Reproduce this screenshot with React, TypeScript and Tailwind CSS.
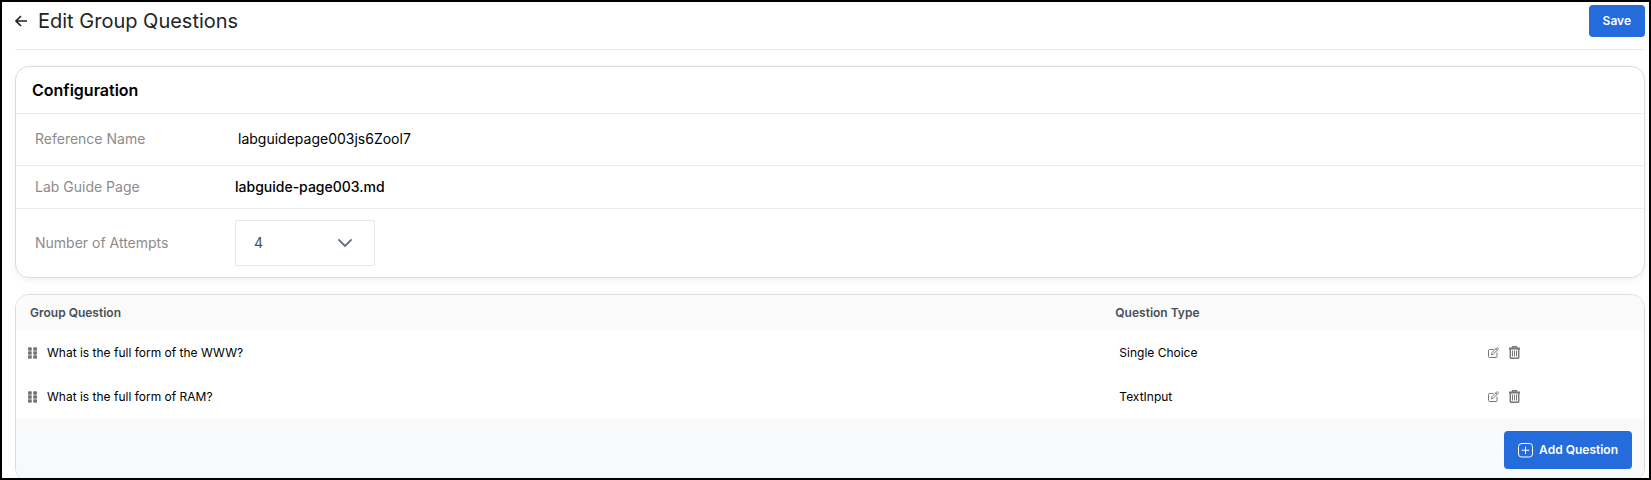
import { useState } from "react";

const QUESTIONS = [
  { id: 1, text: "What is the full form of the WWW?", type: "Single Choice" },
  { id: 2, text: "What is the full form of RAM?", type: "TextInput" },
];

function ArrowLeftIcon() {
  return (
    <svg width="12" height="12" viewBox="0 0 12 12" fill="none" stroke="currentColor" strokeWidth="1.6" aria-hidden="true">
      <path d="M12 6H1M6 1L1 6l5 5" />
    </svg>
  );
}

function ChevronIcon() {
  return (
    <svg width="14" height="8" viewBox="0 0 14 8" fill="none" stroke="currentColor" strokeWidth="1.8" strokeLinecap="round" strokeLinejoin="round" aria-hidden="true">
      <path d="M1 1l6 6 6-6" />
    </svg>
  );
}

function GripIcon() {
  return (
    <svg width="9" height="12" viewBox="0 0 9 12" fill="currentColor" aria-hidden="true">
      {[0, 4, 8].map((y) => (
        <g key={y}>
          <rect x="0" y={y + 0.2} width="3.8" height="3.6" rx="0.8" />
          <rect x="5.2" y={y + 0.2} width="3.8" height="3.6" rx="0.8" />
        </g>
      ))}
    </svg>
  );
}

function EditIcon() {
  return (
    <svg width="11" height="11" viewBox="0 0 11 11" fill="none" stroke="currentColor" strokeLinejoin="round" strokeLinecap="round" aria-hidden="true">
      <path d="M5 2.500H1.500a1 1 0 0 0-1 1v6a1 1 0 0 0 1 1h6.500a1 1 0 0 0 1-1V6" />
      <path d="M3.600 7.500l.5-2L8.600 1a.9.9 0 0 1 1.400 0 .9.9 0 0 1 0 1.400L5.500 7z" />
      <path d="M7.600 2l1.400 1.400" />
    </svg>
  );
}

function TrashIcon() {
  return (
    <svg width="11" height="13" viewBox="0 0 11 13" fill="none" stroke="currentColor" strokeLinejoin="round" aria-hidden="true">
      <path d="M0 2.500h11" strokeWidth="1.800" />
      <path d="M3.500 2V.800h4V2" strokeWidth="1.400" />
      <path d="M1.300 2.500v8.800a1 1 0 0 0 1 1h6.400a1 1 0 0 0 1-1V2.500" strokeWidth="1.500" />
      <path d="M3.500 4.500v6M5.500 4.500v6M7.500 4.500v6" strokeWidth="1" />
    </svg>
  );
}

function PlusSquareIcon() {
  return (
    <svg width="15" height="15" viewBox="0 0 15 15" fill="none" stroke="currentColor" strokeLinecap="round" aria-hidden="true">
      <rect x="0.5" y="0.5" width="14" height="13.500" rx="3" />
      <path d="M7.500 4v6.500M4.200 7.250h6.600" />
    </svg>
  );
}

export default function App() {
  const [attempts, setAttempts] = useState("4");

  return (
    <main className="h-screen overflow-hidden border-2 border-black bg-white pr-1 pl-[13px] font-['Inter',sans-serif] text-black">
      <header className="flex h-12 items-start justify-between border-b border-[#ebebeb] pt-[3px]">
        <div className="flex items-center gap-[11px] text-[#212529]">
          <button type="button" aria-label="Back">
            <ArrowLeftIcon />
          </button>
          <h1 className="text-xl leading-8">Edit Group Questions</h1>
        </div>
        <button type="button" className="h-8 rounded bg-[#246bdc] px-[14px] text-xs font-semibold text-white">
          Save
        </button>
      </header>

      <section className="mt-4 rounded-[14px] border border-[#dcdcdc] text-sm shadow-[0_2px_6px_rgba(0,0,0,0.06)]">
        <h2 className="px-4 pt-[11px] pb-[11px] text-base leading-6 font-semibold">Configuration</h2>
        <div className="flex h-[52px] items-center border-t border-[#ebebeb] px-[19px] pb-[2px]">
          <label htmlFor="reference" className="w-[200px] text-[#8c8c8c]">Reference Name</label>
          <input
            id="reference"
            className="min-w-0 flex-1 px-[3px] outline-none"
            defaultValue="labguidepage003js6Zool7"
          />
        </div>
        <div className="flex h-[43px] items-center border-t border-[#ebebeb] px-[19px]">
          <span className="w-[200px] text-[#8c8c8c]">Lab Guide Page</span>
          <span className="font-medium">labguide-page003.md</span>
        </div>
        <div className="flex items-center border-t border-[#ebebeb] px-[19px] py-[11px]">
          <label htmlFor="attempts" className="w-[200px] text-[#8c8c8c]">Number of Attempts</label>
          <div className="relative text-[#6c757d]">
            <select
              id="attempts"
              value={attempts}
              onChange={(e) => setAttempts(e.target.value)}
              className="h-[46px] w-[140px] appearance-none rounded-xs border border-gray-200 bg-white pl-[18px] text-[#495057]"
            >
              {["1", "2", "3", "4", "5"].map((n) => (
                <option key={n}>{n}</option>
              ))}
            </select>
            <span className="pointer-events-none absolute inset-y-0 right-[23px] flex items-center">
              <ChevronIcon />
            </span>
          </div>
        </div>
      </section>

      <section className="mt-4 overflow-hidden rounded-[14px] border border-[#dcdcdc]">
        <table className="w-full table-fixed text-left text-xs">
          <thead className="bg-[#fbfbfb] text-[#495057]">
            <tr className="h-9">
              <th className="w-2/3 px-[14px] font-semibold">Group Question</th>
              <th className="w-[23%] px-[14px] font-semibold">Question Type</th>
              <th aria-label="Actions" />
            </tr>
          </thead>
          <tbody>
            {QUESTIONS.map((q) => (
              <tr key={q.id} className="h-11">
                <td className="px-3">
                  <div className="flex items-center gap-[10px]">
                    <span className="text-[#757575]">
                      <GripIcon />
                    </span>
                    {q.text}
                  </div>
                </td>
                <td className="px-[18px]">{q.type}</td>
                <td className="px-3 pb-[2px]">
                  <div className="flex items-center gap-[10px] text-[#777777]">
                    <button type="button" aria-label={`Edit ${q.text}`}>
                      <EditIcon />
                    </button>
                    <button type="button" aria-label={`Delete ${q.text}`}>
                      <TrashIcon />
                    </button>
                  </div>
                </td>
              </tr>
            ))}
          </tbody>
        </table>
        <div className="flex justify-end bg-[#f8f9fb] p-3">
          <button
            type="button"
            className="flex h-[38px] items-center gap-[6px] rounded bg-[#246bdc] px-[14px] text-xs font-semibold text-white"
          >
            <PlusSquareIcon />
            Add Question
          </button>
        </div>
      </section>
    </main>
  );
}
